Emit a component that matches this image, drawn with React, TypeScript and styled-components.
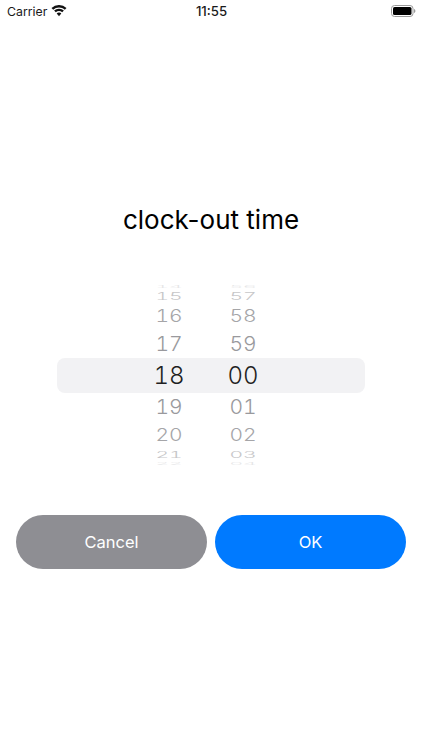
import React from 'react'
import styled, { createGlobalStyle } from 'styled-components'

const GlobalStyle = createGlobalStyle`
  html, body {
    margin: 0;
    padding: 0;
    background: #fff;
    font-family: Inter, "Liberation Sans", sans-serif;
  }
`

const Screen = styled.div`
  width: 422px;
  height: 750px;
  overflow: hidden;
  display: flex;
  flex-direction: column;
  background: #fff;
`

const StatusBar = styled.div`
  height: 22px;
  padding: 0 6px 0 7px;
  display: grid;
  grid-template-columns: 1fr auto 1fr;
  align-items: center;
  color: #1a1a1a;
`

const Carrier = styled.div`
  display: flex;
  align-items: center;
  gap: 4px;
  font-size: 12.3px;
`

const Clock = styled.div`
  font-size: 13.2px;
  font-weight: 500;
`

const BatteryWrap = styled.div`
  display: flex;
  justify-content: flex-end;
`

const Title = styled.h1`
  margin: 181px 0 0;
  height: 34px;
  line-height: 34px;
  text-align: center;
  font-size: 26px;
  font-weight: 400;
  color: #000;
`

const Picker = styled.div`
  position: relative;
  margin-top: 48px;
  height: 182px;
  display: flex;
  justify-content: center;
  padding-right: 10px;
`

const Selection = styled.div`
  position: absolute;
  left: 57px;
  right: 57px;
  top: 73px;
  height: 35px;
  border-radius: 8px;
  background: #f2f2f4;
`

const Wheel = styled.div`
  position: relative;
  width: 74px;
  overflow: hidden;
  display: flex;
  flex-direction: column;
`

const Item = styled.div<{ $h: number; $squash: number; $fade: number; $selected?: boolean }>`
  height: ${p => p.$h}px;
  line-height: ${p => p.$h}px;
  text-align: center;
  font-size: ${p => (p.$selected ? 24 : 21)}px;
  font-weight: 300;
  font-variant-numeric: tabular-nums;
  color: ${p => (p.$selected ? '#1f1f22' : '#8f8f93')};
  opacity: ${p => p.$fade};
  transform: scaleY(${p => p.$squash});
`

const Actions = styled.div`
  margin-top: 48px;
  padding: 0 16px;
  display: grid;
  grid-template-columns: 1fr 1fr;
  gap: 8px;
`

const Button = styled.button<{ $primary?: boolean }>`
  height: 54px;
  border: none;
  border-radius: 27px;
  background: ${p => (p.$primary ? '#007aff' : '#8e8e93')};
  color: #fff;
  font-family: inherit;
  font-size: 16.5px;
  font-weight: 400;
`

const rows = [
  { h: 4, squash: 0.18, fade: 0.22 },
  { h: 14, squash: 0.5, fade: 0.5 },
  { h: 26, squash: 0.8, fade: 0.8 },
  { h: 30, squash: 0.95, fade: 0.9 },
  { h: 34, squash: 1, fade: 1, selected: true },
  { h: 28, squash: 0.95, fade: 0.9 },
  { h: 28, squash: 0.8, fade: 0.8 },
  { h: 12, squash: 0.45, fade: 0.5 },
  { h: 6, squash: 0.18, fade: 0.22 },
]

const hours = ['14', '15', '16', '17', '18', '19', '20', '21', '22']
const minutes = ['56', '57', '58', '59', '00', '01', '02', '03', '04']

const WifiIcon = () => (
  <svg width="16" height="12" viewBox="0 0 16 12">
    <path d="M8 2.4c2.200 0 4.200.8 5.800 2.300l1.700-1.800A11 11 0 0 0 8 0 11 11 0 0 0 .5 2.900l1.700 1.800A8.500 8.500 0 0 1 8 2.400z" fill="#111" />
    <path d="M8 6.100c1.200 0 2.300.4 3.200 1.200l1.700-1.800A7.400 7.400 0 0 0 8 3.700a7.400 7.400 0 0 0-4.900 1.800l1.700 1.800c.9-.8 2-1.200 3.200-1.200z" fill="#111" />
    <path d="M8 7.600c-.9 0-1.700.3-2.300.9L8 11.200l2.300-2.700c-.6-.6-1.400-.9-2.300-.9z" fill="#111" />
  </svg>
)

const BatteryIcon = () => (
  <svg width="25" height="12" viewBox="0 0 25 12">
    <rect x="0.5" y="0.5" width="21.5" height="11" rx="3" fill="none" stroke="#9a9a9a" />
    <rect x="2" y="2" width="18.5" height="8" rx="1.6" fill="#000" />
    <path d="M23 4v4c.8-.3 1.400-1.100 1.400-2S23.800 4.300 23 4z" fill="#9a9a9a" />
  </svg>
)

const WheelColumn = ({ values }: { values: string[] }) => (
  <Wheel>
    {values.map((v, i) => (
      <Item key={v} $h={rows[i].h} $squash={rows[i].squash} $fade={rows[i].fade} $selected={rows[i].selected}>
        {v}
      </Item>
    ))}
  </Wheel>
)

export default function App() {
  return (
    <>
      <GlobalStyle />
      <Screen>
        <StatusBar>
          <Carrier>
            Carrier
            <WifiIcon />
          </Carrier>
          <Clock>11:55</Clock>
          <BatteryWrap>
            <BatteryIcon />
          </BatteryWrap>
        </StatusBar>
        <Title>clock-out time</Title>
        <Picker>
          <Selection />
          <WheelColumn values={hours} />
          <WheelColumn values={minutes} />
        </Picker>
        <Actions>
          <Button>Cancel</Button>
          <Button $primary>OK</Button>
        </Actions>
      </Screen>
    </>
  )
}
